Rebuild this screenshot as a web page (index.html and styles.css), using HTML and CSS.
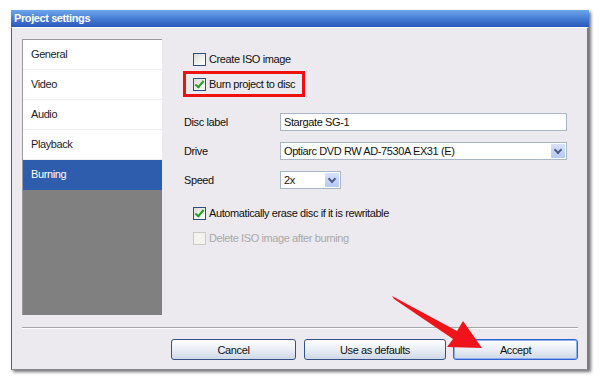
FILE: index.html
```html
<html lang="en">
<head>
<meta charset="UTF-8">
<meta name="viewport" content="width=device-width, initial-scale=1.0">
<title>Project settings</title>
<link rel="stylesheet" href="styles.css">
</head>
<body>
<div class="window">
  <div class="titlebar">Project settings</div>
  <div class="window-body">
    <div class="main">
      <ul class="sidebar">
        <li>General</li>
        <li>Video</li>
        <li>Audio</li>
        <li>Playback</li>
        <li class="active">Burning</li>
      </ul>
      <div class="content">
        <label class="check first"><span class="box"></span>Create ISO image</label>
        <div class="highlight">
          <label class="check"><span class="box checked"></span>Burn project to disc</label>
        </div>
        <div class="form">
          <span class="label">Disc label</span>
          <div class="field">Stargate SG-1</div>
          <span class="label">Drive</span>
          <div class="field select">Optiarc DVD RW AD-7530A EX31 (E)<span class="drop"></span></div>
          <span class="label">Speed</span>
          <div class="field select small">2x<span class="drop"></span></div>
        </div>
        <label class="check erase"><span class="box checked"></span>Automatically erase disc if it is rewritable</label>
        <label class="check disabled"><span class="box"></span>Delete ISO image after burning</label>
      </div>
    </div>
    <div class="separator"></div>
    <div class="buttons">
      <button class="btn">Cancel</button>
      <button class="btn wide">Use as defaults</button>
      <button class="btn default">Accept</button>
    </div>
  </div>
</div>
<svg class="arrow" width="600" height="381" viewBox="0 0 600 381">
  <polygon points="392,296 457,331 463,321 482,348 447,347 453,339 394,299" fill="#ee1419"/>
</svg>
</body>
</html>
```
FILE: styles.css
```css
body {
  margin: 0;
  padding: 10px 0 0 11px;
  background-color: #fff;
  font-family: "Liberation Sans", Arial, sans-serif;
  font-size: 11px;
  letter-spacing: -0.4px;
  color: #111;
}

.window {
  width: 578px;
  box-shadow: 2px 2px 3px rgba(0, 0, 0, 0.55);
}

.titlebar {
  height: 17px;
  line-height: 16px;
  padding-left: 3px;
  color: #fff;
  font-weight: bold;
  font-size: 11px;
  background: linear-gradient(#6ea6ea, #4a82d8 45%, #2b57b9);
}

.window-body {
  height: 330px;
  padding: 11px 9px 0 10px;
  background-color: #eceaef;
  border-top: 1px solid #fdfdfd;
  border-left: 1px solid #3a63c0;
  border-right: 2px solid #7c7c80;
  border-bottom: 1px solid #8a8a8e;
}

.main {
  display: flex;
  height: 276px;
}

.sidebar {
  list-style: none;
  margin: 0;
  padding: 0;
  width: 139px;
  background-color: #808080;
  border-top: 1px solid #9a9a9a;
  border-left: 1px solid #9a9a9a;
}

.sidebar li {
  height: 29px;
  line-height: 29px;
  padding-left: 8px;
  background-color: #fff;
  border-bottom: 1px solid #efefef;
  color: #1a1a2a;
}

.sidebar li.active {
  background-color: #2f5dae;
  border-bottom-color: #2f5dae;
  color: #fff;
}

.content {
  flex: 1;
  margin-left: 21px;
}

.check {
  display: flex;
  align-items: center;
  height: 18px;
  padding-left: 10px;
  white-space: nowrap;
}

.check.first {
  margin-top: 11px;
}

.box {
  width: 11px;
  height: 11px;
  margin-right: 3px;
  border: 1px solid #2a4f86;
  background: linear-gradient(135deg, #dcdcd6, #fff);
  position: relative;
}

.box.checked::after {
  content: "";
  position: absolute;
  left: 3px;
  top: 0;
  width: 3px;
  height: 7px;
  border-right: 2px solid #1ea31e;
  border-bottom: 2px solid #1ea31e;
  transform: rotate(40deg);
}

.highlight {
  width: 116px;
  height: 20px;
  margin-top: 3px;
  border: 3px solid #f01010;
  display: flex;
  align-items: center;
}

.highlight .check {
  padding-left: 7px;
}

.form {
  display: grid;
  grid-template-columns: 97px 287px;
  row-gap: 11px;
  margin-top: 16px;
  align-items: center;
}

.label {
  padding-left: 1px;
}

.field {
  height: 16px;
  line-height: 16px;
  padding-left: 3px;
  border: 1px solid #a7b6c8;
  background-color: #fff;
  position: relative;
}

.field.small {
  width: 56px;
}

.drop {
  position: absolute;
  right: 1px;
  top: 1px;
  width: 14px;
  height: 14px;
  background: linear-gradient(#d6e2fb, #b6c9f2);
  border-radius: 1px;
}

.drop::after {
  content: "";
  position: absolute;
  left: 4px;
  top: 3px;
  width: 4px;
  height: 4px;
  border-right: 2px solid #4d6185;
  border-bottom: 2px solid #4d6185;
  transform: rotate(45deg);
}

.check.erase {
  margin-top: 15px;
}

.check.disabled {
  margin-top: 7px;
  color: #a9a8a8;
}

.check.disabled .box {
  border-color: #cbcac4;
  background: #f4f3f0;
}

.separator {
  margin-top: 12px;
  height: 1px;
  background-color: #a5a5a8;
  border-bottom: 1px solid #fff;
}

.buttons {
  display: flex;
  justify-content: flex-end;
  gap: 8px;
  margin-top: 10px;
}

.btn {
  width: 125px;
  height: 21px;
  padding: 0;
  font-family: "Liberation Sans", Arial, sans-serif;
  font-size: 11px;
  letter-spacing: -0.4px;
  color: #111;
  background: linear-gradient(#fdfeff, #e9eef6 50%, #cfd8e6);
  border: 1px solid #35518a;
  border-radius: 3px;
}

.btn.wide {
  width: 142px;
}

.btn.default {
  margin-left: -1px;
  border-color: #2f64d0;
  box-shadow: inset 0 0 0 1px #8fb0f0;
}

.arrow {
  position: absolute;
  left: 0;
  top: 0;
}
```
